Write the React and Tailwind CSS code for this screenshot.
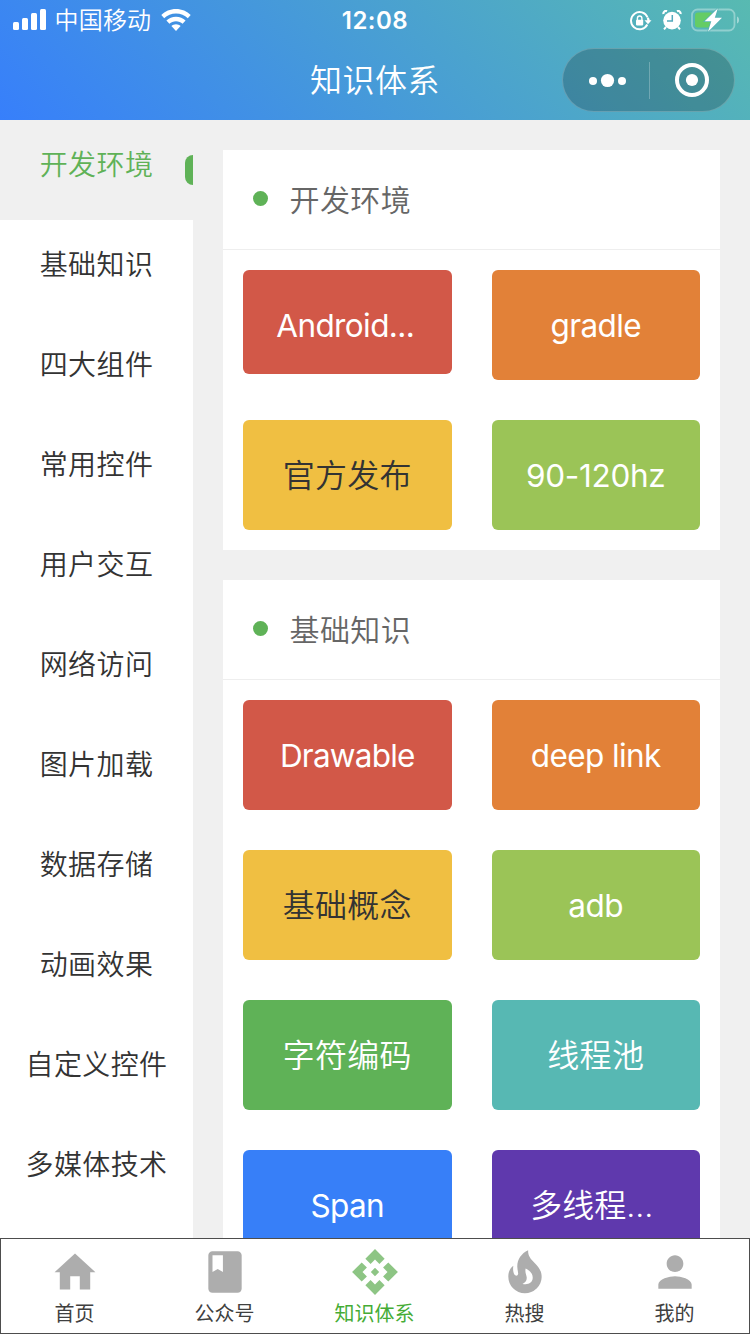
import React from "react";
import { MdClass, MdApi, MdPerson } from "react-icons/md";

const categories = [
  "开发环境", "基础知识", "四大组件", "常用控件", "用户交互", "网络访问",
  "图片加载", "数据存储", "动画效果", "自定义控件", "多媒体技术",
];

const sections = [
  {
    title: "开发环境",
    items: [
      { label: "Android...", style: "bg-[#d25848] text-white h-[104px] pt-[7px] pr-1 text-[31.5px] font-normal tracking-[-0.6px]" },
      { label: "gradle", style: "bg-[#e28138] text-white h-[110px] pt-px text-[31.5px] font-normal tracking-[-0.6px]" },
      { label: "官方发布", style: "bg-[#f0bf42] text-[#333333] h-[110px] pt-0.5 text-[32px] font-[350] tracking-[0.3px]" },
      { label: "90-120hz", style: "bg-[#9bc457] text-white h-[110px] pt-px text-[31.5px] font-normal tracking-[-0.3px]" },
    ],
  },
  {
    title: "基础知识",
    items: [
      { label: "Drawable", style: "bg-[#d25848] text-white h-[110px] pt-px text-[31.5px] font-normal tracking-[-0.8px]" },
      { label: "deep link", style: "bg-[#e28138] text-white h-[110px] pt-px text-[31.5px] font-normal tracking-[-0.6px]" },
      { label: "基础概念", style: "bg-[#f0bf42] text-[#333333] h-[110px] pt-0.5 text-[32px] font-[350] tracking-[0.3px]" },
      { label: "adb", style: "bg-[#9bc457] text-white h-[110px] pt-px text-[31.5px] font-normal tracking-[-0.5px]" },
      { label: "字符编码", style: "bg-[#5fb257] text-white h-[110px] pt-0.5 text-[32px] font-[350] tracking-[0.3px]" },
      { label: "线程池", style: "bg-[#57b8b3] text-white h-[110px] pt-0.5 text-[32px] font-[350] tracking-[0.3px]" },
      { label: "Span", style: "bg-[#377ff8] text-white h-[110px] pt-px text-[31.5px] font-normal tracking-[-0.6px]" },
      { label: "多线程...", style: "bg-[#5f39ad] text-white h-[110px] pt-px pr-[8px] text-[32px] font-[350] tracking-[0px]" },
    ],
  },
];

function HomeIcon({ className }) {
  return (
    <svg viewBox="0 0 24 24" fill="currentColor" className={className}>
      <path d="M9.700 20.400v-6.300h4.600v6.300h5v-8.300h2.500L12 3.100 2.200 12.100h2.500v8.300z" />
    </svg>
  );
}

function FlameIcon({ className }) {
  return (
    <svg viewBox="0 0 24 24" fill="currentColor" className={className}>
      <path
        fillRule="evenodd"
        d="M13.500 1.600C10.200 3.100 8.200 6.200 8.300 9.500C8.300 10.900 8.800 12.200 8.700 12.900C8.600 13.700 7.900 14.100 7.300 13.600C6.400 12.800 6.100 10.900 6.400 9C4.800 10.100 4 12 4 14.200A8 7.900 0 0 0 20 14.400C20 11.200 18.400 9.500 16.400 7.400C14.500 5.500 13.400 4.100 13.500 1.600ZM12.300 10.300C14.700 11.400 15.800 13.100 15.700 14.900C15.600 17.200 13.500 18.300 10.800 17.700C12.300 17.100 13 16 12.800 14.400C12.600 13 11.900 12.200 12.300 10.300Z"
      />
    </svg>
  );
}

const tabs = [
  { label: "首页", Icon: HomeIcon },
  { label: "公众号", Icon: MdClass },
  { label: "知识体系", Icon: MdApi, active: true },
  { label: "热搜", Icon: FlameIcon },
  { label: "我的", Icon: MdPerson },
];

function StatusBar() {
  return (
    <div className="grid h-10 grid-cols-3 items-center text-white">
      <div className="flex items-center pl-[13px]">
        <svg width="33" height="21" viewBox="0 0 33 21" fill="currentColor" className="-mt-0.5">
          <rect x="0" y="13" width="6" height="8" rx="1.5" />
          <rect x="9" y="9" width="6" height="12" rx="1.5" />
          <rect x="18" y="4" width="6" height="17" rx="1.5" />
          <rect x="27" y="0" width="6" height="21" rx="1.5" />
        </svg>
        <span className="ml-[8.5px] pt-px text-[24px] leading-[38px] font-[350] tracking-[0.2px]">中国移动</span>
        <svg width="30" height="22" viewBox="0 0 30 22" fill="currentColor" className="-mt-px ml-[10px]">
          <path d="M15 0C9.200 0 4 2.300 0.300 6L3.200 9.200C6.300 6.200 10.400 4.400 15 4.400S23.700 6.200 26.800 9.200L29.700 6C26 2.300 20.800 0 15 0Z" />
          <path d="M15 7.800C11.300 7.800 7.900 9.200 5.400 11.600L8.400 14.800C10.100 13.200 12.400 12.200 15 12.200S19.900 13.200 21.600 14.800L24.600 11.600C22.100 9.200 18.700 7.800 15 7.800Z" />
          <path d="M15 15.200C13.200 15.200 11.600 15.900 10.400 17L15 22L19.600 17C18.400 15.900 16.800 15.200 15 15.200Z" />
        </svg>
      </div>
      <div className="pt-px text-center text-[24px] leading-10 font-semibold tracking-[0.5px]">12:08</div>
      <div className="flex items-center justify-end pr-[10px]">
        <svg width="22" height="20" viewBox="0 0 22 20" fill="none" className="mr-[10px]">
          <path d="M17.300 13.500A8.600 8.600 0 1 1 17.600 6.500" stroke="currentColor" strokeWidth="1.900" />
          <path d="M14.500 9.200L18 13.200L21.500 9.200H19.800L18.900 6.400L16.800 7L17.300 9.200Z" fill="currentColor" />
          <rect x="6" y="8.800" width="7.200" height="5.600" rx="0.800" fill="currentColor" />
          <path d="M7.400 9V7.300A2.200 2.200 0 0 1 11.900 7.300V9" stroke="currentColor" strokeWidth="1.400" />
        </svg>
        <svg width="20" height="20" viewBox="0 0 20 20" fill="none" className="mr-[9px] -mt-px">
          <circle cx="10" cy="10.600" r="8.800" fill="currentColor" />
          <path d="M1.500 4A2.500 2.500 0 0 1 5 1.200M18.500 4A2.500 2.500 0 0 0 15 1.200" stroke="currentColor" strokeWidth="2.200" />
          <path d="M4 17L2 19.300M16 17L18 19.300" stroke="currentColor" strokeWidth="2" />
          <path d="M10.300 5V11H5" stroke="#52a9bc" strokeWidth="1.500" />
        </svg>
        <svg width="49" height="24" viewBox="0 0 49 24" fill="none" className="-mt-px">
          <rect x="1" y="1.500" width="42.500" height="21" rx="5.500" stroke="#fff" strokeOpacity="0.350" strokeWidth="1.800" />
          <path d="M46 8.500C48.700 9.400 48.700 14.600 46 15.500Z" fill="#fff" fillOpacity="0.450" />
          <rect x="4" y="4.500" width="18" height="15" rx="3" fill="#65cc65" />
          <path d="M26.900 0.300L13.700 13.300H20.300L17 23.700L31 9.700H23.800Z" fill="#fff" stroke="#55b3b5" strokeWidth="1.500" paintOrder="stroke" />
        </svg>
      </div>
    </div>
  );
}

function Header() {
  return (
    <header className="h-[120px] shrink-0 bg-[linear-gradient(45deg,#377ffb,#58bab1)] text-white">
      <StatusBar />
      <div className="grid h-20 grid-cols-[1fr_auto_1fr] items-center pr-[15px]">
        <div className="col-start-2 pt-px pl-[15px] text-[32px] leading-[79px] font-[350] tracking-[0.5px]">知识体系</div>
        <div className="flex h-16 w-[173px] items-center justify-self-end rounded-full border border-white/20 bg-black/20">
          <svg width="86" height="62" viewBox="0 0 86 62" fill="currentColor">
            <circle cx="30" cy="32" r="4" />
            <circle cx="44.500" cy="31.500" r="6.600" />
            <circle cx="59" cy="32" r="4" />
          </svg>
          <div className="h-[37px] w-px bg-white/25" />
          <svg width="84" height="62" viewBox="0 0 84 62">
            <circle cx="42" cy="31" r="15" fill="none" stroke="currentColor" strokeWidth="4" />
            <circle cx="42" cy="31" r="6.100" fill="currentColor" />
          </svg>
        </div>
      </div>
    </header>
  );
}

function Sidebar() {
  return (
    <nav className="flex w-[193px] shrink-0 flex-col overflow-hidden bg-white">
      {categories.map((name, i) => (
        <div
          key={name}
          className={
            i === 0
              ? "relative h-[100px] shrink-0 bg-[#f0f0f0] text-center text-[28px] leading-[91px] font-[350] tracking-[0.4px] text-[#5fb257]"
              : "h-[100px] shrink-0 text-center text-[28px] leading-[91px] font-[350] tracking-[0.4px] text-[#333333]"
          }
        >
          {name}
          {i === 0 && <span className="absolute top-[35px] right-0 h-[30px] w-2 rounded-l-lg bg-[#5fb257]" />}
        </div>
      ))}
    </nav>
  );
}

function Section({ title, items }) {
  return (
    <section className="shrink-0 bg-white">
      <div className="flex h-[100px] items-center border-b border-[#eeeeee] pl-[29.5px]">
        <span className="-mt-0.5 size-[15px] rounded-full bg-[#5fb257]" />
        <h2 className="ml-[22px] pt-px text-[30px] font-[350] tracking-[0.4px] text-[#666666]">{title}</h2>
      </div>
      <div className="grid grid-cols-2 items-start gap-10 p-5">
        {items.map(({ label, style }) => (
          <div key={label} className={`flex items-center justify-center rounded-md ${style}`}>
            {label}
          </div>
        ))}
      </div>
    </section>
  );
}

function TabBar() {
  return (
    <footer className="grid h-24 shrink-0 grid-cols-5 bg-white shadow-[inset_0_0_0_1px_#4d4d4d]">
      {tabs.map(({ label, Icon, active }) => (
        <div key={label} className="flex flex-col items-center pt-[9px]">
          <Icon className={active ? "size-[50px] text-[#8dc584]" : "size-[50px] text-[#adadad]"} />
          <span className={active ? "pt-px pr-px text-[20px] leading-8 text-[#45ac35]" : "pt-px pr-px text-[20px] leading-8 text-[#404040]"}>{label}</span>
        </div>
      ))}
    </footer>
  );
}

export default function App() {
  return (
    <div className="flex h-[1334px] w-[750px] flex-col overflow-hidden bg-[#f0f0f0] font-['Inter','Noto_Sans_CJK_SC',sans-serif]">
      <Header />
      <main className="flex min-h-0 flex-1 overflow-hidden">
        <Sidebar />
        <div className="flex flex-1 flex-col gap-[30px] overflow-hidden p-[30px]">
          {sections.map((s) => (
            <Section key={s.title} {...s} />
          ))}
        </div>
      </main>
      <TabBar />
    </div>
  );
}
